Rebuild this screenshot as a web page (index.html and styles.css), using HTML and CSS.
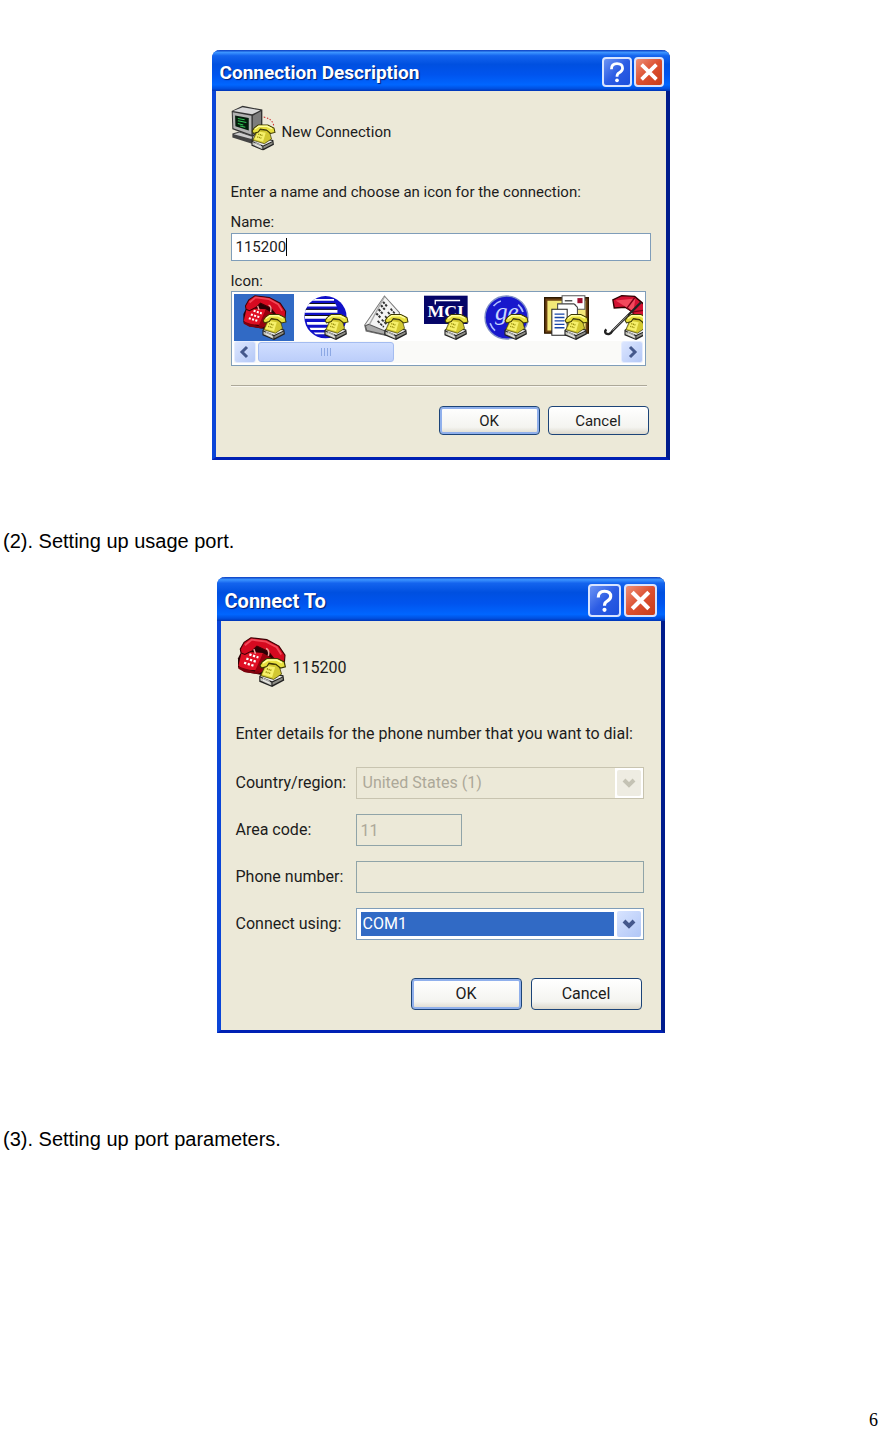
FILE: index.html
```
<!DOCTYPE html>
<html lang="en">
  <head>
    <meta charset="UTF-8" />
    <meta name="viewport" content="width=device-width, initial-scale=1.0" />
    <title>Setting up the connection</title>
    <link rel="stylesheet" href="styles.css">
  </head>
  <body>
    <!-- Shared icon artwork -->
    <svg class="sprite" aria-hidden="true">
      <defs>
        <symbol id="mini-phone" viewBox="0 0 132 132">
          <path d="M60 103 L76 92 L124 101 L126 115 L94 132 L60 118 Z" fill="#222" />
          <path d="M63 104 L78 96 L122 104 L94 117 Z" fill="#eee" />
          <path d="M63 107 L92 120 V128 L63 115 Z" fill="#c4c4bc" />
          <path d="M95 120 L122 107 V113 L95 127 Z" fill="#8d8d85" />
          <path d="M70 109 L88 117 M70 114 L88 122" stroke="#fff" stroke-width="2" />
          <path d="M78 70 L112 74 L119 98 L98 112 L64 102 Z" fill="#d2c832" stroke="#3a3600" stroke-width="2" />
          <path d="M80 76 L102 80 L94 106 L68 99 Z" fill="#f6f06a" />
          <path d="M80 84 l12 4 M77 92 l12 4" stroke="#8f8600" stroke-width="4" stroke-dasharray="3 2" />
          <path d="M62 75 L68 66 L80 57 L108 57 L126 66 L129 79 L116 82 L104 72 L86 69 L80 78 L66 82 Z" fill="#e8e040" stroke="#3a3600" stroke-width="3" />
          <path d="M70 69 L82 61 L106 61 L120 68" fill="none" stroke="#ffffa0" stroke-width="4" />
        </symbol>
        <symbol id="red-phone" viewBox="0 0 132 132">
          <path d="M4 56 L14 36 L60 22 L122 56 L124 76 L66 100 L20 92 L4 80 Z" fill="#2a0004" />
          <path d="M14 38 L70 42 L58 88 L18 86 L5 76 Z" fill="#e01024" />
          <path d="M70 42 L100 60 L96 78 L60 96 L48 92 Z" fill="#98000e" />
          <path d="M5 78 L50 92 L60 90 L58 98 L22 93 L5 84 Z" fill="#80000c" />
          <path d="M10 32 L20 14 L38 2 L80 7 L112 24 L128 48 L126 72 L108 76 L98 56 L84 38 L54 24 L42 36 L22 46 L12 42 Z" fill="#d60a20" stroke="#400004" stroke-width="3" />
          <path d="M22 22 L40 7 L78 12 L106 27 L118 46" fill="none" stroke="#f24858" stroke-width="5" />
          <path d="M46 32 L50 44 M78 30 Q88 34 84 50" fill="none" stroke="#f2a6a0" stroke-width="4" />
          <path d="M34 46 L58 54 M26 57 L54 66 M20 68 L46 76" stroke="#fff" stroke-width="6" stroke-dasharray="6 4" />
          <use href="#mini-phone" />
        </symbol>
        <symbol id="computer" viewBox="0 0 132 132">
          <path d="M2 16 L34 1 L92 12 L92 72 L64 92 L4 70 Z" fill="#333" />
          <path d="M6 16 L34 5 L86 14 L62 26 Z" fill="#d8d8d8" />
          <path d="M5 20 L60 30 L60 86 L7 67 Z" fill="#b2b2b2" />
          <path d="M64 30 L88 17 L88 70 L64 87 Z" fill="#7c7c7c" />
          <path d="M12 29 L52 37 L52 73 L13 61 Z" fill="#031b0b" />
          <path d="M20 38 L40 42 M20 45 L45 50 M20 53 L36 57 M27 60 L42 64" stroke="#33c456" stroke-width="3" />
          <path d="M4 82 L24 76 L66 90 L62 112 L4 94 Z" fill="#444" />
          <path d="M8 84 L25 79 L62 92 L60 98 Z" fill="#ccc" />
          <path d="M96 34 Q122 38 126 62" fill="none" stroke="#c22" stroke-width="3" stroke-dasharray="4 5" />
          <use href="#mini-phone" />
        </symbol>
        <clipPath id="globe-clip"><circle cx="63" cy="65" r="62" /></clipPath>
      </defs>
    </svg>

    <div class="page">
      <form class="dialog">
        <header class="titlebar">
          <h2>Connection Description</h2>
          <button type="button" class="caption-btn help" aria-label="Help">
            <svg viewBox="0 0 28 28"><path d="M8 11 Q8 5 14 5 Q20 5 20 10 Q20 13 16 15 Q14 16 14 19" fill="none" stroke="#fff" stroke-width="3" /><circle cx="14" cy="23" r="2" fill="#fff" /></svg>
          </button>
          <button type="button" class="caption-btn close" aria-label="Close">
            <svg viewBox="0 0 28 28"><path d="M6 6 L22 22 M22 6 L6 22" stroke="#fff" stroke-width="4" /></svg>
          </button>
        </header>
        <div class="dialog-body">
          <div class="heading">
            <svg class="heading-icon"><use href="#computer" /></svg>
            <span>New Connection</span>
          </div>
          <p class="prompt">Enter a name and choose an icon for the connection:</p>
          <label for="name">Name:</label>
          <div class="name-field">
            <input type="text" id="name" value="115200" />
            <span class="caret"></span>
          </div>
          <div class="label" id="iconLabel">Icon:</div>
          <div class="icon-list" role="group" aria-labelledby="iconLabel">
            <div class="icons">
              <button type="button" class="selected" aria-label="Red phone">
                <svg viewBox="0 0 132 132"><use href="#red-phone" /></svg>
              </button>
              <button type="button" aria-label="Globe">
                <svg viewBox="0 0 132 132">
                  <g clip-path="url(#globe-clip)">
                    <rect width="132" height="132" fill="#1010c8" />
                    <g fill="#fff">
                      <path d="M26 12 H88 V17 H22 Z" />
                      <path d="M10 26 H92 L96 34 H6 Z" />
                      <path d="M4 43 H98 V52 H0 Z" />
                      <path d="M2 61 H100 V70 H2 Z" />
                      <path d="M8 79 H96 V87 H10 Z" />
                      <path d="M16 96 H86 V103 H20 Z" />
                      <path d="M28 110 H80 V115 H34 Z" />
                    </g>
                    <path d="M12 25 H92 M4 42 H98 M2 60 H100" stroke="#111" stroke-width="3" />
                  </g>
                  <use href="#mini-phone" />
                </svg>
              </button>
              <button type="button" aria-label="Newspaper">
                <svg viewBox="0 0 132 132">
                  <path d="M60 3 L104 52 L96 104 L62 118 L6 106 L2 88 Z" fill="#f4f4f4" stroke="#777" stroke-width="3" />
                  <path d="M4 90 L14 86 L62 106 L60 116 L8 104 Z" fill="#aaa" stroke="#555" stroke-width="3" />
                  <path d="M60 5 L16 86" stroke="#aaa" stroke-width="4" />
                  <path d="M56 20 L68 34 M50 30 L62 44 M43 42 L55 55 M36 54 L48 66" stroke="#333" stroke-width="6" stroke-dasharray="7 3" />
                  <path d="M78 40 L90 54 M70 50 L82 64 M62 62 L72 74 M52 72 L66 86 M40 76 L58 94" stroke="#333" stroke-width="5" stroke-dasharray="8 3" />
                  <use href="#mini-phone" />
                </svg>
              </button>
              <button type="button" aria-label="MCI">
                <svg viewBox="0 0 132 132">
                  <rect y="2" width="128" height="83" fill="#050568" />
                  <path d="M33 28 V16 H106" fill="none" stroke="#fff" stroke-width="4" />
                  <text x="10" y="64" class="mci">MCI</text>
                  <use href="#mini-phone" />
                </svg>
              </button>
              <button type="button" aria-label="GE">
                <svg viewBox="0 0 132 132">
                  <circle cx="66" cy="66" r="63" fill="#1818cc" stroke="#8090c8" stroke-width="4" />
                  <circle cx="66" cy="66" r="51" fill="none" stroke="#b0c0ff" stroke-width="5" stroke-dasharray="26 54" stroke-dashoffset="-36" />
                  <text x="32" y="72" class="ge">ge</text>
                  <use href="#mini-phone" />
                </svg>
              </button>
              <button type="button" aria-label="Letters">
                <svg viewBox="0 0 132 132">
                  <path d="M2 8 H130 V112 H2 Z" fill="#6d4213" stroke="#2c1800" stroke-width="4" />
                  <path d="M10 17 H122 V104 H10 Z" fill="#f3e878" />
                  <path d="M53 2 H120 V42 H53 Z" fill="#fff" stroke="#555" stroke-width="3" />
                  <path d="M98 9 H113 V24 H98 Z" fill="#a01030" />
                  <path d="M61 17 H83 M71 30 H94" stroke="#555" stroke-width="4" />
                  <path d="M40 26 H88 L98 36 V104 H40 Z" fill="#fff" stroke="#444" stroke-width="3" />
                  <path d="M23 42 H68 V118 H23 Z" fill="#fff" stroke="#222" stroke-width="3" />
                  <path d="M31 56 H60 M31 66 H60 M31 76 H60 M31 86 H60 M31 96 H60" stroke="#1746a8" stroke-width="4" />
                  <use href="#mini-phone" />
                </svg>
              </button>
              <button type="button" aria-label="Umbrella">
                <svg viewBox="0 0 132 132">
                  <path d="M26 14 L52 2 L90 4 L118 28 L126 62 L104 90 L92 72 L84 50 L62 36 L30 38 Z" fill="#d31232" stroke="#300" stroke-width="4" />
                  <path d="M34 16 L62 34 L86 50 L92 10 Z" fill="#f2485c" />
                  <path d="M90 8 L68 38 L84 50 L120 44 M84 50 L104 88" fill="none" stroke="#7c0018" stroke-width="4" />
                  <path d="M108 22 L26 104 Q16 120 5 112 Q1 106 7 101" fill="none" stroke="#222" stroke-width="7" />
                  <path d="M70 60 L25 104" stroke="#ccc" stroke-width="2" />
                  <use href="#mini-phone" />
                </svg>
              </button>
            </div>
            <div class="scrollbar">
              <button type="button" aria-label="Scroll left"><svg viewBox="0 0 20 20"><path d="M12 5 L7 10 L12 15" /></svg></button>
              <div class="track"><div class="thumb"><i></i><i></i><i></i><i></i></div></div>
              <button type="button" aria-label="Scroll right"><svg viewBox="0 0 20 20"><path d="M8 5 L13 10 L8 15" /></svg></button>
            </div>
          </div>
          <hr />
          <div class="actions">
            <button type="button" class="btn default">OK</button>
            <button type="button" class="btn">Cancel</button>
          </div>
        </div>
      </form>

      <p class="step step-port">(2). Setting up usage port.</p>

      <form class="dialog connect-to">
        <header class="titlebar">
          <h2>Connect To</h2>
          <button type="button" class="caption-btn help" aria-label="Help">
            <svg viewBox="0 0 28 28"><path d="M8 11 Q8 5 14 5 Q20 5 20 10 Q20 13 16 15 Q14 16 14 19" fill="none" stroke="#fff" stroke-width="3" /><circle cx="14" cy="23" r="2" fill="#fff" /></svg>
          </button>
          <button type="button" class="caption-btn close" aria-label="Close">
            <svg viewBox="0 0 28 28"><path d="M6 6 L22 22 M22 6 L6 22" stroke="#fff" stroke-width="4" /></svg>
          </button>
        </header>
        <div class="dialog-body">
          <div class="heading">
            <svg class="heading-icon"><use href="#red-phone" /></svg>
            <span>115200</span>
          </div>
          <p class="prompt">Enter details for the phone number that you want to dial:</p>
          <div class="fields">
            <label for="country">Country/region:</label>
            <div class="select disabled">
              <select id="country" disabled><option>United States (1)</option></select>
              <svg viewBox="0 0 24 26"><path d="M7 10 L12 15 L17 10" /></svg>
            </div>
            <label for="area">Area code:</label>
            <input type="text" id="area" class="area" value="11" disabled />
            <label for="phone">Phone number:</label>
            <input type="text" id="phone" disabled />
            <label for="port">Connect using:</label>
            <div class="select">
              <select id="port"><option>COM1</option></select>
              <svg viewBox="0 0 24 26"><path d="M7 10 L12 15 L17 10" /></svg>
            </div>
          </div>
          <div class="actions">
            <button type="button" class="btn default">OK</button>
            <button type="button" class="btn">Cancel</button>
          </div>
        </div>
      </form>

      <p class="step step-params">(3). Setting up port parameters.</p>

      <footer>6</footer>
    </div>
  </body>
</html>
```
FILE: styles.css
```
* {
  box-sizing: border-box;
}
body {
  margin: 0;
  background-color: #fff;
  color: #000;
  font-family: "Liberation Sans", Arial, sans-serif;
  font-size: 20px;
}
.sprite {
  position: absolute;
  width: 0;
  height: 0;
}
.page {
  display: flex;
  flex-direction: column;
  min-height: 100vh;
  padding: 50px 4px 0 3px;
}
.step {
  margin: 0;
  line-height: 24px;
}
.step-port {
  margin-top: 69px;
  margin-bottom: 24px;
}
.step-params {
  margin-top: 94px;
}
footer {
  margin-top: auto;
  text-align: right;
  font-family: "Liberation Serif", "Times New Roman", serif;
  font-size: 18px;
  line-height: 18px;
}

/* Dialog window */
.dialog {
  width: 458px;
  max-width: 100%;
  margin: 0 auto;
  background-color: #ece9d8;
  border: 4px solid #0a45d8;
  border-top: none;
  border-right: 4px solid #001c8c;
  border-bottom: 3px solid #0020b4;
  border-radius: 8px 8px 0 0;
  font-family: Roboto, Arial, sans-serif;
  font-size: 15px;
  line-height: 20px;
  color: #1c1c1c;
}
.titlebar {
  display: flex;
  align-items: center;
  gap: 2px;
  height: 41px;
  margin: 0 -4px;
  padding: 2px 6px 0 8px;
  border-radius: 8px 8px 0 0;
  background: linear-gradient(#0a3cc0 0, #3c94ff 6%, #1464ee 14%, #0050e0 35%, #0054ee 60%, #0066ff 85%, #0050e0 94%, #0034b4 100%);
}
.titlebar h2 {
  flex: 1;
  margin: 0;
  padding-top: 2px;
  color: #fff;
  font-size: 19px;
  font-weight: 700;
  text-shadow: 1px 1px 1px #001c70;
}
.caption-btn {
  width: 30px;
  height: 30px;
  padding: 0;
  border: 2px solid #d8e4ff;
  border-radius: 4px;
}
.caption-btn svg {
  display: block;
  width: 100%;
  height: 100%;
}
.help {
  background: linear-gradient(135deg, #6c94f4, #2c5ce4 50%, #1c50dc);
}
.close {
  background: linear-gradient(135deg, #ee9078, #dc5030 50%, #c83c18);
}
.dialog-body {
  padding: 14px 15px 22px;
}
.heading {
  display: flex;
  align-items: center;
  gap: 6px;
}
.heading-icon {
  width: 45px;
  height: 46px;
}
.heading span {
  padding-top: 8px;
}
.prompt {
  margin: 31px 0 10px;
  white-space: nowrap;
}
label,
.label {
  display: block;
}
input,
select {
  width: 100%;
  border: 1px solid #7f9db9;
  border-radius: 0;
  font: inherit;
  color: inherit;
}
input {
  height: 28px;
  padding: 0 4px;
}
.name-field {
  position: relative;
  margin: 1px 0 10px;
}
.name-field input {
  display: block;
}
.caret {
  position: absolute;
  top: 5px;
  left: 55px;
  width: 1px;
  height: 18px;
  background-color: #000;
}

/* Icon picker */
.icon-list {
  height: 75px;
  margin-right: 5px;
  padding: 2px;
  border: 1px solid #7f9db9;
  background-color: #fff;
}
.icons {
  display: flex;
  overflow: hidden;
}
.icons button {
  flex: 0 0 60px;
  height: 47px;
  padding: 0 0 0 10px;
  border: none;
  background: none;
}
.icons .selected {
  padding-left: 8px;
  background-color: #316ac5;
}
.icons svg {
  display: block;
  width: 45px;
  height: 45px;
}
.mci {
  font: bold 52px "Liberation Serif", serif;
  fill: #fff;
}
.ge {
  font: italic 74px "Liberation Serif", serif;
  fill: #c8d4ff;
}
.scrollbar {
  display: flex;
  gap: 2px;
  height: 22px;
  background-color: #fafaf8;
}
.scrollbar button {
  width: 22px;
  padding: 0;
  border: 1px solid #e4ecff;
  border-radius: 3px;
  background: linear-gradient(135deg, #dce6ff, #b4c8f6);
}
.scrollbar svg {
  display: block;
  width: 20px;
  height: 20px;
}
.scrollbar path {
  fill: none;
  stroke: #44588c;
  stroke-width: 3;
}
.track {
  flex: 1;
}
.thumb {
  display: flex;
  align-items: center;
  justify-content: center;
  gap: 2px;
  width: 136px;
  height: 20px;
  margin-top: 1px;
  border: 1px solid #a4bcf0;
  border-radius: 3px;
  background: linear-gradient(#d0deff, #bccefa);
}
.thumb i {
  width: 1px;
  height: 8px;
  background-color: #8ca8e4;
}
hr {
  height: 2px;
  margin: 19px 4px 19px 0;
  border: none;
  border-top: 1px solid #aca899;
  border-bottom: 1px solid #f8f6ee;
}

/* Dialog buttons */
.actions {
  display: flex;
  justify-content: flex-end;
  gap: 8px;
  padding-right: 2px;
}
.btn {
  width: 101px;
  height: 29px;
  padding: 0;
  border: 1px solid #1c4478;
  border-radius: 4px;
  background: linear-gradient(#fff, #f4f4f0 75%, #dcd8cc);
  font: inherit;
  color: inherit;
}
.default {
  box-shadow: inset 0 0 0 2px #90b0ec;
}

/* Connect To is drawn slightly larger */
.connect-to {
  width: 448px;
  font-size: 16px;
}
.connect-to .titlebar {
  height: 44px;
  gap: 3px;
  padding-right: 8px;
}
.connect-to .titlebar h2 {
  font-size: 20px;
}
.connect-to .caption-btn {
  width: 33px;
  height: 33px;
}
.connect-to .dialog-body {
  padding: 16px 17px 20px 15px;
}
.connect-to .heading-icon {
  width: 51px;
  height: 50px;
}
.connect-to .heading span {
  padding-top: 12px;
}
.connect-to .prompt {
  margin: 37px 0 23px;
}
.fields {
  display: grid;
  grid-template-columns: 120px 1fr;
  align-items: center;
  row-gap: 15px;
  margin-bottom: 38px;
}
.fields input {
  height: 32px;
}
.fields input:disabled {
  background-color: #ece9d8;
  border-color: #90a4a8;
  color: #aca899;
}
.fields .area {
  width: 106px;
}
.select {
  position: relative;
}
.select select {
  display: block;
  height: 32px;
  padding: 0 30px 0 6px;
  appearance: none;
  background: linear-gradient(#316ac5, #316ac5) no-repeat 4px center / calc(100% - 33px) 24px #fff;
  color: #fff;
}
.select svg {
  position: absolute;
  top: 3px;
  right: 3px;
  width: 24px;
  height: 26px;
  border-radius: 2px;
  background: linear-gradient(135deg, #d8e4ff, #b0c6f6);
  pointer-events: none;
}
.select path {
  fill: none;
  stroke: #44588c;
  stroke-width: 4;
}
.disabled select {
  background: linear-gradient(#fff, #fff) no-repeat right center / 28px 100% #ece9d8;
  border-color: #c8c4b0;
  color: #aca899;
  opacity: 1;
}
.disabled svg {
  background: #eeece2;
}
.disabled path {
  stroke: #c4c2b4;
}
.connect-to .actions {
  gap: 9px;
}
.connect-to .btn {
  width: 111px;
  height: 32px;
}
```
